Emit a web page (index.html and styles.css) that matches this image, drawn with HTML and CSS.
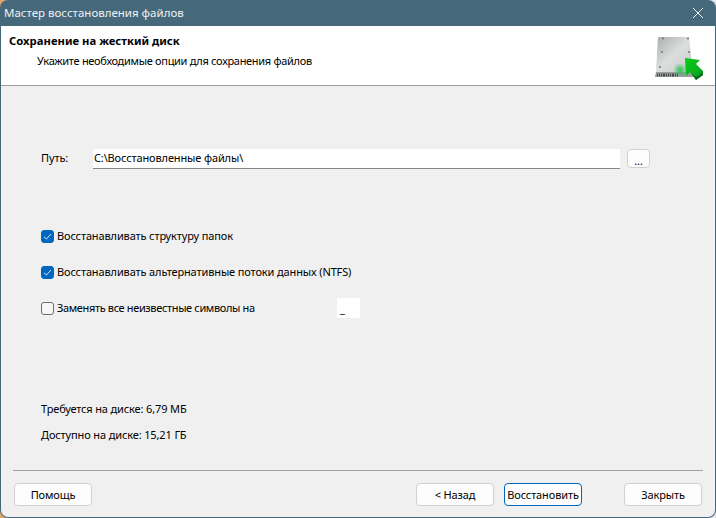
FILE: index.html
```html
<!DOCTYPE html>
<html lang="ru">
<head>
<meta charset="utf-8">
<title>Мастер восстановления файлов</title>
<link rel="stylesheet" href="styles.css">
</head>
<body>
<div class="window">
  <header class="titlebar">
    <span class="title">Мастер восстановления файлов</span>
    <svg class="close" width="12" height="12" viewBox="0 0 12 12"><path d="M1 1L11 11M11 1L1 11" stroke="#f2f5f6" stroke-width="1" fill="none"/></svg>
  </header>
  <section class="banner">
    <div class="banner-text">
      <h1 class="heading">Сохранение на жесткий диск</h1>
      <p class="sub">Укажите необходимые опции для сохранения файлов</p>
    </div>
    <svg class="disk" width="50" height="50" viewBox="0 0 50 50">
      <defs>
        <linearGradient id="dg" x1="0" y1="0" x2="1" y2="1"><stop offset="0" stop-color="#a9adab"/><stop offset=".5" stop-color="#dcdfdd"/><stop offset="1" stop-color="#c4c8c5"/></linearGradient>
        <radialGradient id="gl"><stop offset="0" stop-color="#19c44a" stop-opacity=".9"/><stop offset="1" stop-color="#19c44a" stop-opacity="0"/></radialGradient>
        <linearGradient id="ar" x1="0" y1="0" x2="1" y2="1"><stop offset="0" stop-color="#06cc14"/><stop offset=".65" stop-color="#08b01e"/><stop offset="1" stop-color="#067a1e"/></linearGradient>
      </defs>
      <path d="M5 3H36L40 38H3Z" fill="url(#dg)"/>
      <path d="M3 38H40V43H2Z" fill="#9a9e9c"/>
      <path d="M4 39.500h1v3h-1zm2 0h1v3h-1zm2 0h1v3h-1zm2 0h2v3h-2zm3 0h1v3h-1zm2 0h1v3h-1zm2 0h1v3h-1zm2 0h2v3h-2zm3 0h1v3h-1zm2 0h1v3h-1z" fill="#454a48"/>
      <g fill="#777c7a"><circle cx="10" cy="4.500" r="1.100"/><circle cx="35" cy="4.500" r="1.100"/><circle cx="9" cy="18" r="1.100"/><circle cx="36" cy="18" r="1.100"/><circle cx="7" cy="33" r="1.100"/></g>
      <circle cx="27" cy="36" r="7" fill="url(#gl)"/>
      <path d="M32 24L47 26L43 30L50 37L50 41L43 46L37 38L33 42Z" fill="url(#ar)"/>
      <path d="M50 39L50 41L43 46L38 39L43 43Z" fill="#056b1c"/>
    </svg>
  </section>
  <main class="content">
    <div class="path-row">
      <label class="path-label">Путь:</label>
      <div class="path-input">C:\Восстановленные файлы\</div>
      <button class="btn browse">...</button>
    </div>
    <div class="options">
      <div class="check-row">
        <span class="box on"><svg width="9" height="9" viewBox="0 0 9 9"><path d="M1 4.800L3.400 7L8 2" stroke="#dcebf8" stroke-width="1" fill="none"/></svg></span>
        <span>Восстанавливать структуру папок</span>
      </div>
      <div class="check-row">
        <span class="box on"><svg width="9" height="9" viewBox="0 0 9 9"><path d="M1 4.800L3.400 7L8 2" stroke="#dcebf8" stroke-width="1" fill="none"/></svg></span>
        <span>Восстанавливать альтернативные потоки данных (NTFS)</span>
      </div>
      <div class="check-row">
        <span class="box"></span>
        <span class="replace-text">Заменять все неизвестные символы на</span>
        <span class="char-input">_</span>
      </div>
    </div>
    <div class="stats">
      <p class="stat">Требуется на диске: 6,79 МБ</p>
      <p class="stat">Доступно на диске: 15,21 ГБ</p>
    </div>
  </main>
  <footer class="footer">
    <button class="btn">Помощь</button>
    <div class="nav">
      <button class="btn">&lt; Назад</button>
      <button class="btn primary">Восстановить</button>
      <button class="btn close-btn">Закрыть</button>
    </div>
  </footer>
</div>
</body>
</html>
```

FILE: styles.css
```css
* { box-sizing: border-box; }
html, body { margin: 0; height: 100%; background: linear-gradient(90deg, #e0a468 0 20px, #e3e7e9 20px); }
body { font: 11px/16px "Noto Sans", Roboto, sans-serif; letter-spacing: -0.13px; color: #000; overflow: hidden; }
.window { width: 716px; height: 518px; display: flex; flex-direction: column; background: #45687a; border-radius: 8px; padding: 0 1px 1px 1px; overflow: hidden; }
.titlebar { height: 26px; flex: none; display: flex; align-items: center; justify-content: space-between; padding: 0 11px 0 3px; color: #eef2f4; font-size: 11.500px; letter-spacing: 0; }
.close { display: block; }
.banner { height: 60px; flex: none; background: #fff; border-bottom: 1px solid #a0a0a0; display: flex; justify-content: space-between; padding: 0 12px 0 8px; }
.heading { margin: 7px 0 0; font-size: 11.300px; line-height: 16px; font-weight: 700; letter-spacing: 0; }
.sub { margin: 4px 0 0 28px; letter-spacing: -0.3px; }
.disk { margin-top: 8px; }
.content { flex: 1; background: #f0f0f0; padding: 0 0 0 40px; display: flex; flex-direction: column; }
.path-row { display: flex; align-items: flex-start; margin-top: 63px; height: 20px; }
.path-label { width: 52px; line-height: 18px; flex: none; }
.path-input { width: 527px; height: 20px; flex: none; background: #fff; border-bottom: 1px solid #868686; padding-left: 1px; line-height: 18px; }
.options { margin-top: 59px; display: flex; flex-direction: column; gap: 20px; }
.check-row { display: flex; align-items: center; height: 16px; }
.box { width: 13px; height: 13px; border: 1px solid #6e6e6e; border-radius: 3px; margin-right: 3px; display: flex; align-items: center; justify-content: center; background: #f6f6f6; flex: none; }
.box.on { background: #0067c0; border-color: #0067c0; }
.box svg { display: block; }
.replace-text { width: 280px; flex: none; letter-spacing: -0.36px; }
.char-input { width: 23px; height: 20px; background: #fff; padding: 3px 0 0 3px; }
.stats { margin-top: 85px; display: flex; flex-direction: column; gap: 10px; }
.stat { margin: 0; }
.footer { height: 47px; flex: none; background: #f0f0f0; padding: 13px 13px 0 13px; position: relative; display: flex; justify-content: space-between; border-radius: 0 0 7px 7px; }
.footer::before { content: ""; position: absolute; left: 12px; right: 12px; top: 0; height: 1px; background: #a0a0a0; }
.nav { display: flex; gap: 10px; }
.btn { width: 78px; height: 23px; background: #fdfdfd; border: 1px solid #d0d0d0; border-radius: 4px; font: inherit; letter-spacing: inherit; color: #000; padding: 0; }
.btn.browse { width: 23px; height: 19px; margin-left: 7px; padding: 0 0 1px; line-height: 22px; flex: none; }
.btn.primary { border-color: #0067c0; }
.btn.close-btn { margin-left: 32px; }
```
